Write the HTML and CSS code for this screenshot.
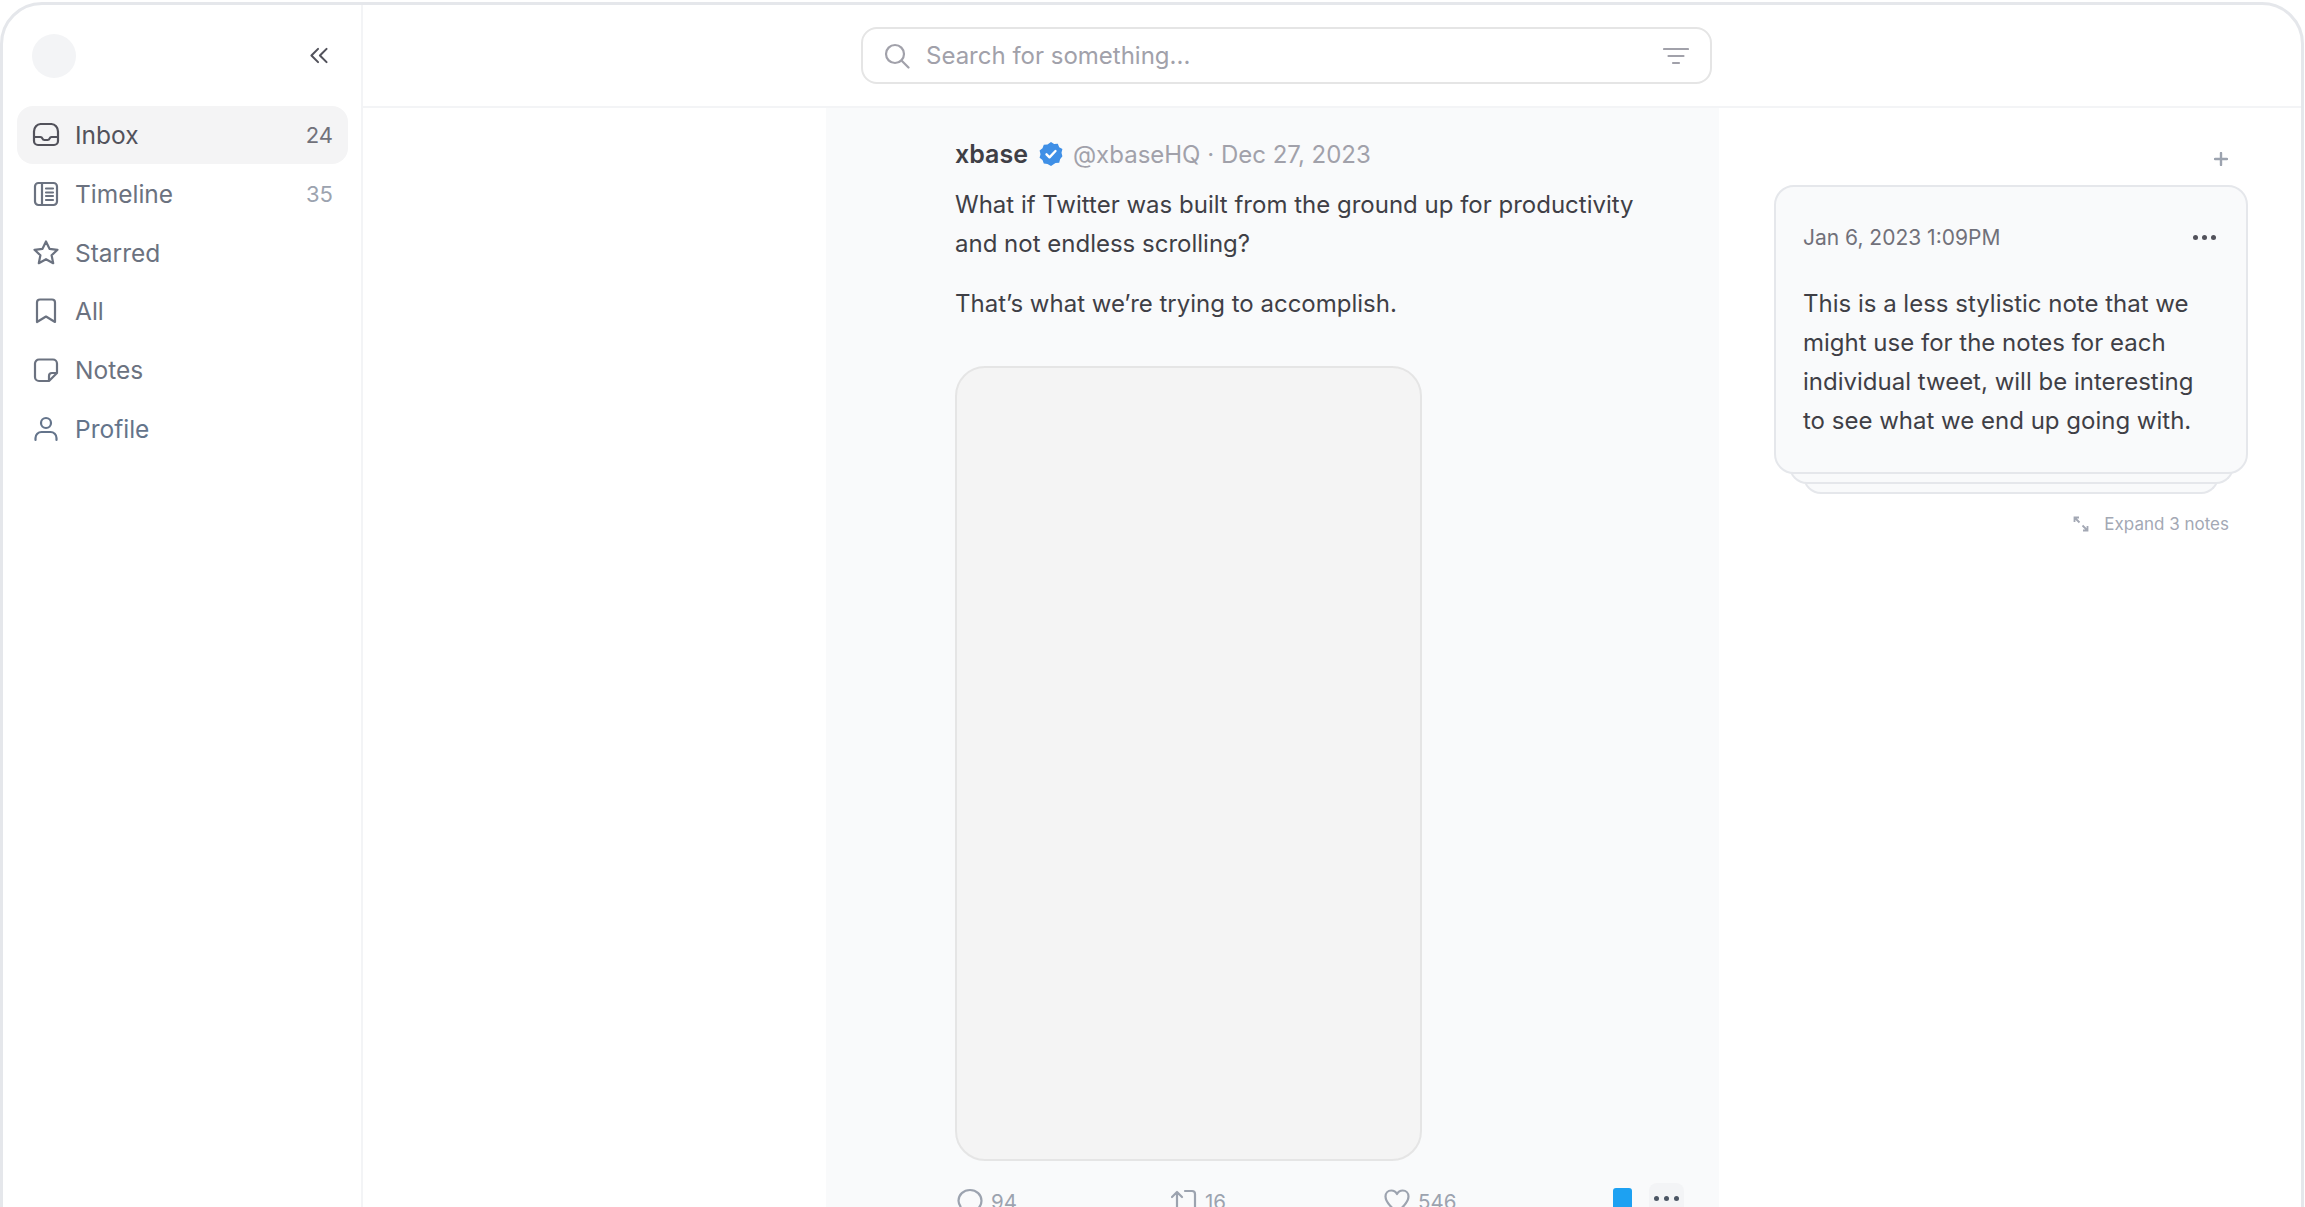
FILE: index.html
```html
<!DOCTYPE html>
<html lang="en">
<head>
    <meta charset="UTF-8">
    <title>Inbox</title>
    <link rel="stylesheet" href="styles.css">
</head>
<body>
    <div class="frame">
        <aside class="sidebar">
            <div class="side-head">
                <div class="avatar"></div>
                <svg class="collapse" viewBox="0 0 20 18" fill="none" stroke="currentColor" stroke-width="2.2" stroke-linecap="round" stroke-linejoin="round"><path d="M9 2 2 9l7 7M18 2l-7 7 7 7"/></svg>
            </div>
            <nav class="nav">
                <a class="nav-item active">
                    <svg class="nav-icon" viewBox="0 0 28 28" fill="none" stroke="currentColor" stroke-width="2.2" stroke-linejoin="round" stroke-linecap="round"><path d="M2 16V10.5C2 6.5 5 3 8.5 3h11C23 3 26 6.500 26 10.500V20a4 4 0 0 1-4 4H6a4 4 0 0 1-4-4v-4h6.500c1 0 1.500 .5 1.800 1.300.4 1 1.200 1.700 2.200 1.700h3c1 0 1.800-.7 2.200-1.700.3-.8.8-1.300 1.800-1.300H26"/></svg>
                    <span class="nav-label">Inbox</span><span class="count">24</span>
                </a>
                <a class="nav-item">
                    <svg class="nav-icon" viewBox="0 0 28 28" fill="none" stroke="currentColor" stroke-width="2.2" stroke-linecap="round" stroke-linejoin="round"><rect x="3" y="3" width="22" height="22" rx="3.500"/><path d="M10 3v22M14 8.500h7M14 12.500h7M14 16h7M14 20h7"/></svg>
                    <span class="nav-label">Timeline</span><span class="count muted">35</span>
                </a>
                <a class="nav-item">
                    <svg class="nav-icon" viewBox="0 0 28 28" fill="none" stroke="currentColor" stroke-width="2.2" stroke-linejoin="round"><path d="m14 2.500 3.500 7.300 8 1-5.900 5.500 1.600 7.900-7.200-4-7.200 4 1.600-7.900-5.900-5.500 8-1z"/></svg>
                    <span class="nav-label">Starred</span>
                </a>
                <a class="nav-item">
                    <svg class="nav-icon" viewBox="0 0 28 28" fill="none" stroke="currentColor" stroke-width="2.2" stroke-linejoin="round"><path d="M5 5.500A3 3 0 0 1 8 2.500h12a3 3 0 0 1 3 3V25l-9-5.500L5 25z"/></svg>
                    <span class="nav-label">All</span>
                </a>
                <a class="nav-item">
                    <svg class="nav-icon" viewBox="0 0 28 28" fill="none" stroke="currentColor" stroke-width="2.2" stroke-linejoin="round"><path d="M7 3.500h14a4 4 0 0 1 4 4V17l-8 8H7a4 4 0 0 1-4-4V7.500a4 4 0 0 1 4-4z"/><path d="M25 17h-5a3 3 0 0 0-3 3v5"/></svg>
                    <span class="nav-label">Notes</span>
                </a>
                <a class="nav-item slate">
                    <svg class="nav-icon" viewBox="0 0 28 28" fill="none" stroke="currentColor" stroke-width="2.2" stroke-linecap="round"><circle cx="14" cy="8" r="5"/><path d="M3.500 25v-2a6 6 0 0 1 6-6h9a6 6 0 0 1 6 6v2"/></svg>
                    <span class="nav-label">Profile</span>
                </a>
            </nav>
        </aside>

        <div class="content">
            <header class="topbar">
                <div class="search">
                    <svg class="search-icon" viewBox="0 0 26 26" fill="none" stroke="currentColor" stroke-width="2.200" stroke-linecap="round"><circle cx="11" cy="11" r="9"/><path d="m17.500 17.500 7 7"/></svg>
                    <span class="search-text">Search for something...</span>
                    <svg class="filter-icon" viewBox="0 0 26 18" fill="none" stroke="currentColor" stroke-width="2.200" stroke-linecap="round"><path d="M1 2h24M5.500 9h15M10 16h6"/></svg>
                </div>
            </header>

            <main class="main">
                <article class="tweet">
                    <div class="tweet-head">
                        <span class="tweet-name">xbase</span>
                        <svg class="badge" viewBox="0 0 24 24"><path fill="#3f8fe6" d="M12 0l3.100 2 3.700-.3 1.400 3.500 3.200 1.900-.9 3.600.9 3.600-2.300 2.900-.9 3.600-3.700.3L12 24l-3.500-2.100-3.700-.3-1.300-3.500L.6 15.800l.9-3.600-.9-3.800 2.900-2.200 1.300-3.500 3.700-.3z"/><path fill="none" stroke="#fff" stroke-width="2.400" stroke-linecap="round" stroke-linejoin="round" d="m7.500 12.300 3 3 6-6.300"/></svg>
                        <span class="tweet-meta">@xbaseHQ · Dec 27, 2023</span>
                    </div>
                    <p class="tweet-text">What if Twitter was built from the ground up for productivity<br>and not endless scrolling?</p>
                    <p class="tweet-text">That’s what we’re trying to accomplish.</p>
                    <div class="media"></div>
                    <div class="actions">
                        <div class="action action-reply">
                            <svg class="action-icon" viewBox="0 0 26 26" fill="none" stroke="currentColor" stroke-width="2.200" stroke-linejoin="round"><path d="M13 2c6.500 0 11.500 4.700 11.500 10.800S19.500 23.500 13 23.500c-2 0-3.700-.4-5.300-1.200L2 24l1.500-5.500A10.500 10.500 0 0 1 1.500 12.800C1.500 6.700 6.500 2 13 2z"/></svg>
                            <span>94</span>
                        </div>
                        <div class="action action-retweet">
                            <svg class="action-icon" viewBox="0 0 26 26" fill="none" stroke="currentColor" stroke-width="2.200" stroke-linecap="round" stroke-linejoin="round"><path d="M6 25V4M1 9l5-5 5 5M14 3h7a3 3 0 0 1 3 3v14"/></svg>
                            <span>16</span>
                        </div>
                        <div class="action action-like">
                            <svg class="action-icon" viewBox="0 0 26 26" fill="none" stroke="currentColor" stroke-width="2.200" stroke-linejoin="round"><path d="M13 24C6 18.500 1.500 14 1.500 8.500 1.500 5 4 2.500 7.300 2.500c2.400 0 4.500 1.200 5.700 3.500 1.200-2.300 3.300-3.500 5.700-3.500 3.300 0 5.800 2.500 5.800 6C24.500 14 20 18.500 13 24z"/></svg>
                            <span>546</span>
                        </div>
                        <div class="bookmark"></div>
                        <div class="more-btn"><i></i><i></i><i></i></div>
                    </div>
                </article>

                <section class="notes">
                    <div class="notes-add">
                        <svg class="plus" viewBox="0 0 14 14" fill="none" stroke="currentColor" stroke-width="2.400" stroke-linecap="round"><path d="M7 1v12M1 7h12"/></svg>
                    </div>
                    <div class="note">
                        <div class="note-head">
                            <span class="note-date">Jan 6, 2023 1:09PM</span>
                            <div class="note-dots"><i></i><i></i><i></i></div>
                        </div>
                        <p class="note-text">This is a less stylistic note that we might use for the notes for each individual tweet, will be interesting to see what we end up going with.</p>
                    </div>
                    <div class="note-layer layer-two"></div>
                    <div class="note-layer layer-three"></div>
                    <div class="expand">
                        <svg class="expand-icon" viewBox="0 0 16 16" fill="none" stroke="currentColor" stroke-width="1.800"><path d="M1.500 6V1.500H6M1.500 1.500l5 5M14.500 10v4.500H10M14.500 14.500l-5-5"/></svg>
                        <span>Expand 3 notes</span>
                    </div>
                </section>
            </main>
        </div>
    </div>
</body>
</html>
```

FILE: styles.css
```css
* { box-sizing: border-box; }
html, body { height: 100%; }
body { margin: 0; background: #fff; overflow: hidden; font-family: "Inter", "Liberation Sans", sans-serif; color: #3f3f46; }

.frame { display: flex; width: 2304px; height: 1400px; margin-top: 2px; border: 3px solid #e5e7eb; border-radius: 42px 42px 0 0; overflow: hidden; background: #fff; }

/* sidebar */
.sidebar { flex: 0 0 360px; border-right: 2px solid #f3f4f6; padding: 0 13px 0 14px; }
.side-head { display: flex; align-items: center; justify-content: space-between; height: 101px; padding: 0 19px 0 15px; }
.avatar { width: 44px; height: 44px; border-radius: 50%; background: #f3f4f6; }
.collapse { width: 20px; height: 17px; color: #52525b; }
.nav { display: flex; flex-direction: column; gap: 0.800px; }
.nav-item { display: flex; align-items: center; height: 58px; padding: 0 15px 0 15px; border-radius: 16px; font-size: 24.500px; color: #6b7280; }
.nav-item.active { background: #f4f4f5; color: #52525b; }
.nav-item.slate { color: #64748b; }
.nav-icon { flex: 0 0 28px; width: 28px; height: 28px; margin-right: 15px; }
.nav-label { flex: 1; }
.count { font-size: 22px; color: #71717a; }
.count.muted { color: #9ca3af; }

/* top bar */
.content { flex: 1; min-width: 0; }
.topbar { height: 103px; border-bottom: 2px solid #f3f4f6; padding: 22px 0 0 498px; }
.search { display: flex; align-items: center; width: 851px; height: 57px; padding: 0 21px 0 21px; border: 2px solid #e5e5e5; border-radius: 16px; }
.search-icon { width: 26px; height: 26px; color: #a1a1aa; margin-right: 16px; }
.search-text { flex: 1; font-size: 24px; color: #a1a1aa; }
.filter-icon { width: 26px; height: 18px; color: #a1a1aa; }

/* tweet column */
.main { display: flex; padding-left: 463px; }
.tweet { flex: 0 0 893px; padding: 29px 0 0 129px; background: #f9fafb; }
.tweet-head { display: flex; align-items: center; height: 34px; font-size: 24px; }
.tweet-name { font-size: 25px; font-weight: 600; color: #3f3f46; }
.badge { width: 24px; height: 24px; margin: 0 10px 0 11px; }
.tweet-meta { color: #a1a1aa; }
.tweet-text { margin: 14px 0 0; font-size: 24px; line-height: 39px; color: #3f3f46; }
.tweet-text + .tweet-text { margin-top: 21px; }
.media { width: 467px; height: 795px; margin-top: 43px; background: #f4f4f4; border: 2px solid #e5e5e5; border-radius: 30px; }
.actions { display: flex; align-items: flex-start; width: 739px; height: 60px; padding-top: 27px; color: #9ca3af; font-size: 20.500px; }
.action { display: flex; align-items: center; gap: 8px; }
.action-reply { width: 216px; padding-left: 2px; }
.action-retweet { width: 213px; }
.action-like { width: 229px; }
.action-icon { width: 26px; height: 26px; }
.bookmark { width: 19px; height: 28px; margin-right: 17px; background: #1da1f2; border-radius: 3px; }
.more-btn { display: flex; gap: 5px; justify-content: center; width: 35px; height: 40px; margin-top: -5px; padding-top: 13px; border-radius: 8px; background: #f3f4f6; }
.more-btn i { width: 5px; height: 5px; border-radius: 50%; background: #4b5563; }

/* notes column */
.notes { flex: 0 0 530px; padding: 0 0 0 55px; }
.notes-add { display: flex; justify-content: flex-end; height: 77px; padding: 44px 21px 0 0; width: 475px; }
.plus { width: 14px; height: 14px; color: #9ca3af; }
.note { position: relative; z-index: 2; width: 474px; height: 289px; padding: 35px 28px 0 27px; background: #f9fafb; border: 2px solid #e5e7eb; border-radius: 20px; }
.note-head { display: flex; align-items: center; justify-content: space-between; height: 30px; }
.note-date { font-size: 21px; color: #71717a; }
.note-dots { display: flex; gap: 4px; padding-right: 2px; }
.note-dots i { width: 5px; height: 5px; border-radius: 50%; background: #52525b; }
.note-text { margin: 32px 0 0; font-size: 24px; line-height: 39px; color: #3f3f46; }
.note-layer { background: #f9fafb; border: 2px solid #e5e7eb; border-top: 0; border-radius: 0 0 18px 18px; }
.layer-two { position: relative; z-index: 1; width: 445px; height: 29px; margin: -19px 0 0 15px; }
.layer-three { width: 416px; height: 30px; margin: -20px 0 0 29px; }
.expand { display: flex; align-items: center; justify-content: flex-end; gap: 15px; width: 455px; margin-top: 20px; font-size: 17px; color: #a3a8b4; }
.expand-icon { width: 16px; height: 16px; }
```
